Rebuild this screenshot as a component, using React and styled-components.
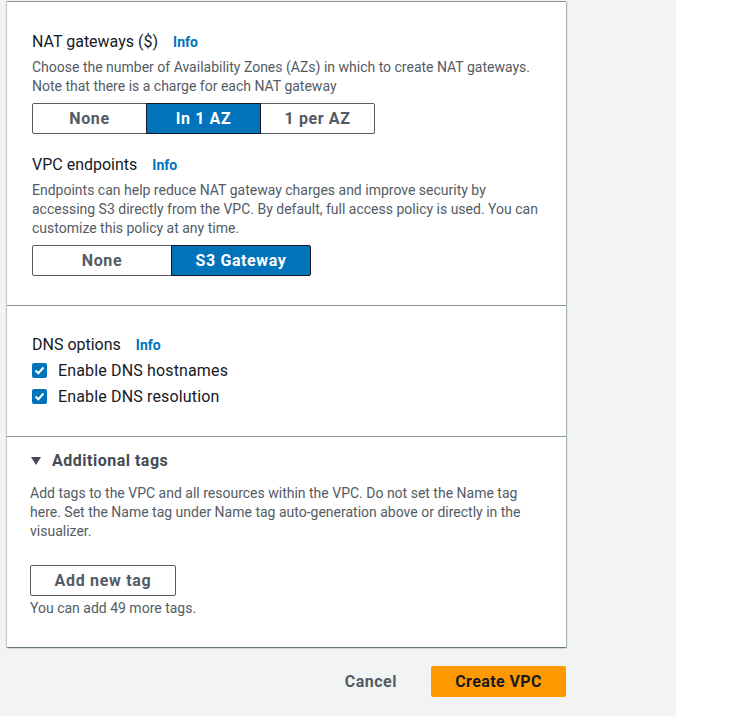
import React, { useState } from "react";
import styled, { createGlobalStyle } from "styled-components";

const Global = createGlobalStyle`
    html, body {
        margin: 0;
        padding: 0;
        background: #ffffff;
    }
    body {
        font-family: Roboto, "Liberation Sans", Arial, sans-serif;
        color: #16191f;
    }
`;

const Page = styled.div`
    display: flex;
    min-height: 716px;
`;

const Main = styled.div`
    width: 669px;
    padding-left: 7px;
    background: #f2f3f3;
`;

const Panel = styled.div`
    width: 559px;
    margin-top: 1px;
    background: #ffffff;
    border-top: 1px solid #879596;
    box-shadow: 0 1px 1px 0 rgba(0, 28, 36, 0.35), 1px 1px 1px 0 rgba(0, 28, 36, 0.25),
        -1px 1px 1px 0 rgba(0, 28, 36, 0.15);
`;

const Section = styled.div`
    padding: ${({ pad }) => pad};
    border-bottom: ${({ last }) => (last ? "none" : "1px solid #879596")};
`;

const Field = styled.div`
    margin-top: ${({ gap }) => gap || 0}px;
`;

const Label = styled.div`
    display: flex;
    align-items: center;
    gap: 15px;
    font-size: 16px;
    line-height: 22px;
    color: #16191f;
`;

const Info = styled.a`
    font-size: 14px;
    font-weight: 700;
    color: #0073bb;
    text-decoration: none;
`;

const Desc = styled.p`
    margin: ${({ top }) => top || 5}px 0 0;
    font-size: 14px;
    line-height: 19px;
    color: #545b64;
`;

const Segmented = styled.div`
    display: flex;
    margin-top: 7px;
`;

const Segment = styled.button`
    width: ${({ w }) => w}px;
    height: 31px;
    margin-left: -1px;
    font-family: inherit;
    font-size: 16px;
    font-weight: 700;
    letter-spacing: 0.6px;
    color: ${({ active }) => (active ? "#ffffff" : "#545b64")};
    background: ${({ active }) => (active ? "#0073bb" : "#ffffff")};
    border: 1px solid ${({ active }) => (active ? "#16191f" : "#545b64")};
    position: relative;
    z-index: ${({ active }) => (active ? 1 : 0)};
    cursor: pointer;

    &:first-child {
        margin-left: 0;
        border-radius: 2px 0 0 2px;
    }
    &:last-child {
        border-radius: 0 2px 2px 0;
    }
`;

const CheckRow = styled.label`
    display: flex;
    align-items: center;
    gap: 11px;
    height: 24px;
    margin-top: 2px;
    font-size: 16px;
    letter-spacing: 0.15px;
    color: #16191f;
    cursor: pointer;
`;

const CheckBox = styled.span`
    width: 15px;
    height: 15px;
    border-radius: 2px;
    background: #0073bb;
    display: flex;
    align-items: center;
    justify-content: center;
`;

const Expander = styled.div`
    display: flex;
    align-items: center;
    gap: 11px;
    font-size: 16px;
    font-weight: 700;
    letter-spacing: 0.5px;
    line-height: 22px;
    color: #444b54;
`;

const Caret = styled.span`
    width: 0;
    height: 0;
    margin-left: 1px;
    border-left: 5px solid transparent;
    border-right: 5px solid transparent;
    border-top: 8px solid #444b54;
`;

const OutlineButton = styled.button`
    margin-top: 24px;
    height: 31px;
    width: 146px;
    padding: 0;
    font-family: inherit;
    font-size: 16px;
    font-weight: 700;
    letter-spacing: 0.7px;
    color: #545b64;
    background: #ffffff;
    border: 1px solid #545b64;
    border-radius: 2px;
`;

const Hint = styled.div`
    margin-top: 3px;
    font-size: 14px;
    line-height: 19px;
    color: #545b64;
`;

const Footer = styled.div`
    width: 559px;
    display: flex;
    justify-content: flex-end;
    align-items: center;
    gap: 14px;
    margin-top: 19px;
`;

const TextButton = styled.button`
    height: 31px;
    padding: 0 20px;
    font-family: inherit;
    font-size: 16px;
    font-weight: 700;
    letter-spacing: 0.5px;
    color: #545b64;
    background: none;
    border: none;
`;

const PrimaryButton = styled.button`
    width: 135px;
    height: 31px;
    font-family: inherit;
    font-size: 16px;
    font-weight: 700;
    letter-spacing: 0.4px;
    color: #16191f;
    background: #ff9900;
    border: none;
    border-radius: 2px;
`;

const Check = () => (
    <svg width="11" height="9" viewBox="0 0 11 9">
        <path d="M1.5 4.5 L4.3 7.2 L9.5 1.5" fill="none" stroke="#fff" strokeWidth="2" />
    </svg>
);

export default function App() {
    const [nat, setNat] = useState("In 1 AZ");
    const [endpoint, setEndpoint] = useState("S3 Gateway");

    return (
        <Page>
            <Global />
            <Main>
                <Panel>
                    <Section pad="29px 25px 29px">
                        <Field>
                            <Label>NAT gateways ($) <Info>Info</Info></Label>
                            <Desc>
                                Choose the number of Availability Zones (AZs) in which to create NAT gateways.
                                <br />
                                Note that there is a charge for each NAT gateway
                            </Desc>
                            <Segmented>
                                {["None", "In 1 AZ", "1 per AZ"].map((o) => (
                                    <Segment key={o} w={115} active={nat === o} onClick={() => setNat(o)}>
                                        {o}
                                    </Segment>
                                ))}
                            </Segmented>
                        </Field>
                        <Field gap={20}>
                            <Label>VPC endpoints <Info>Info</Info></Label>
                            <Desc>
                                Endpoints can help reduce NAT gateway charges and improve security by
                                <br />
                                accessing S3 directly from the VPC. By default, full access policy is used. You can
                                <br />
                                customize this policy at any time.
                            </Desc>
                            <Segmented>
                                {["None", "S3 Gateway"].map((o) => (
                                    <Segment key={o} w={140} active={endpoint === o} onClick={() => setEndpoint(o)}>
                                        {o}
                                    </Segment>
                                ))}
                            </Segmented>
                        </Field>
                    </Section>
                    <Section pad="28px 25px 28px">
                        <Label>DNS options <Info>Info</Info></Label>
                        <CheckRow>
                            <CheckBox><Check /></CheckBox>
                            Enable DNS hostnames
                        </CheckRow>
                        <CheckRow>
                            <CheckBox><Check /></CheckBox>
                            Enable DNS resolution
                        </CheckRow>
                    </Section>
                    <Section pad="13px 23px 29px" last>
                        <Expander>
                            <Caret />
                            Additional tags
                        </Expander>
                        <Desc top={12}>
                            Add tags to the VPC and all resources within the VPC. Do not set the Name tag
                            <br />
                            here. Set the Name tag under Name tag auto-generation above or directly in the
                            <br />
                            visualizer.
                        </Desc>
                        <OutlineButton>Add new tag</OutlineButton>
                        <Hint>You can add 49 more tags.</Hint>
                    </Section>
                </Panel>
                <Footer>
                    <TextButton>Cancel</TextButton>
                    <PrimaryButton>Create VPC</PrimaryButton>
                </Footer>
            </Main>
        </Page>
    );
}
